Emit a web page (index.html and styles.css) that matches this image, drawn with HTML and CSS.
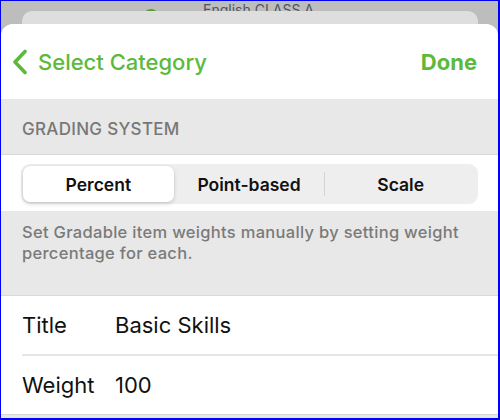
FILE: index.html
```html
<!DOCTYPE html>
<html lang="en">
    <head>
        <meta charset="utf-8">
        <meta name="viewport" content="width=device-width, initial-scale=1">
        <title>Select Category</title>
        <link rel="stylesheet" href="styles.css">
    </head>
    <body>
        <div class="frame">
            <div class="backdrop">
                <span class="dot"></span>
                <span class="class-name">English CLASS A</span>
            </div>
            <div class="card-back"></div>
            <div class="sheet">
                <div class="nav">
                    <button class="nav-back" type="button">
                        <svg width="18" height="26" viewBox="0 0 18 26">
                            <path d="M14 2.5 L4 13 L14 23.5" fill="none" stroke="#5cb93c" stroke-width="3.6" stroke-linecap="round" stroke-linejoin="round"/>
                        </svg>
                        <span>Select Category</span>
                    </button>
                    <button class="nav-done" type="button">Done</button>
                </div>
                <div class="section-title">GRADING SYSTEM</div>
                <div class="segment-band">
                    <div class="segments">
                        <div class="segment active">Percent</div>
                        <div class="segment">Point-based</div>
                        <div class="segment last">Scale</div>
                    </div>
                </div>
                <div class="note">Set Gradable item weights manually by setting weight percentage for each.</div>
                <div class="rows">
                    <div class="row">
                        <span class="row-label">Title</span>
                        <span class="row-value">Basic Skills</span>
                    </div>
                    <div class="row">
                        <span class="row-label">Weight</span>
                        <span class="row-value">100</span>
                    </div>
                </div>
            </div>
        </div>
    </body>
</html>
```

FILE: styles.css
```css
html, body {
    margin: 0;
    padding: 0;
}
body {
    font-family: Inter, "Noto Sans", sans-serif;
}
.frame {
    width: 500px;
    height: 420px;
    box-sizing: border-box;
    border-style: solid;
    border-color: #0000f0;
    border-width: 1px 2px 2px 1px;
    background: #bdbdbd;
    overflow: hidden;
    display: flex;
    flex-direction: column;
}
.backdrop {
    height: 10px;
    flex: none;
    overflow: hidden;
    display: flex;
    align-items: flex-end;
    padding-left: 142px;
}
.dot {
    width: 16px;
    height: 16px;
    border-radius: 50%;
    background: #5a9c34;
    margin-bottom: -14px;
}
.class-name {
    margin-left: 44px;
    font-size: 14px;
    line-height: 14px;
    color: #4a5560;
    margin-bottom: -6px;
}
.card-back {
    height: 13px;
    flex: none;
    margin: 0 20px 0 21px;
    background: #dedede;
    border-radius: 10px 10px 0 0;
}
.sheet {
    flex: 1;
    background: #e8e8e8;
    border-radius: 12px 12px 0 0;
    overflow: hidden;
}
.nav {
    height: 75px;
    background: #fff;
    display: flex;
    align-items: center;
    justify-content: space-between;
    padding: 0 21px 0 10px;
}
.nav button {
    border: none;
    background: none;
    padding: 0;
    font-family: inherit;
    color: #5cb93c;
    font-size: 22px;
}
.nav-back {
    display: flex;
    align-items: center;
    gap: 9px;
    font-weight: 500;
}
.nav-done {
    font-weight: 700;
}
.section-title {
    height: 56px;
    box-sizing: border-box;
    padding: 20px 21px 0;
    font-size: 17px;
    font-weight: 500;
    color: #777;
    letter-spacing: 0.3px;
    border-bottom: 1px solid #d8d8d8;
}
.segment-band {
    background: #fff;
    padding: 9px 20px 7px 20px;
}
.segments {
    height: 40px;
    background: #eeeeef;
    border-radius: 9px;
    display: flex;
    padding: 2px;
    box-sizing: border-box;
}
.segment {
    flex: 1;
    display: flex;
    align-items: center;
    justify-content: center;
    font-size: 17.5px;
    font-weight: 600;
    color: #111;
    border-right: 1px solid #d4d4d4;
    margin: 6px 0;
}
.segment.active {
    margin: 0;
    background: #fff;
    border-radius: 7px;
    border-right: none;
    box-shadow: 0 2px 4px rgba(0, 0, 0, 0.15), 0 0 0 0.5px rgba(0, 0, 0, 0.05);
}
.segment.last {
    border-right: none;
}
.note {
    height: 85px;
    box-sizing: border-box;
    padding: 11px 21px 0;
    font-size: 16.5px;
    line-height: 21px;
    letter-spacing: 0.3px;
    font-weight: 500;
    color: #7a7a7a;
    border-bottom: 1px solid #d8d8d8;
}
.rows {
    background: #fff;
    padding-left: 21px;
    border-bottom: 1px solid #d8d8d8;
}
.row {
    height: 58px;
    display: flex;
    align-items: center;
    font-size: 22px;
    color: #111;
}
.row + .row {
    border-top: 2px solid #e6e6e6;
}
.row-label {
    width: 93px;
}
```
